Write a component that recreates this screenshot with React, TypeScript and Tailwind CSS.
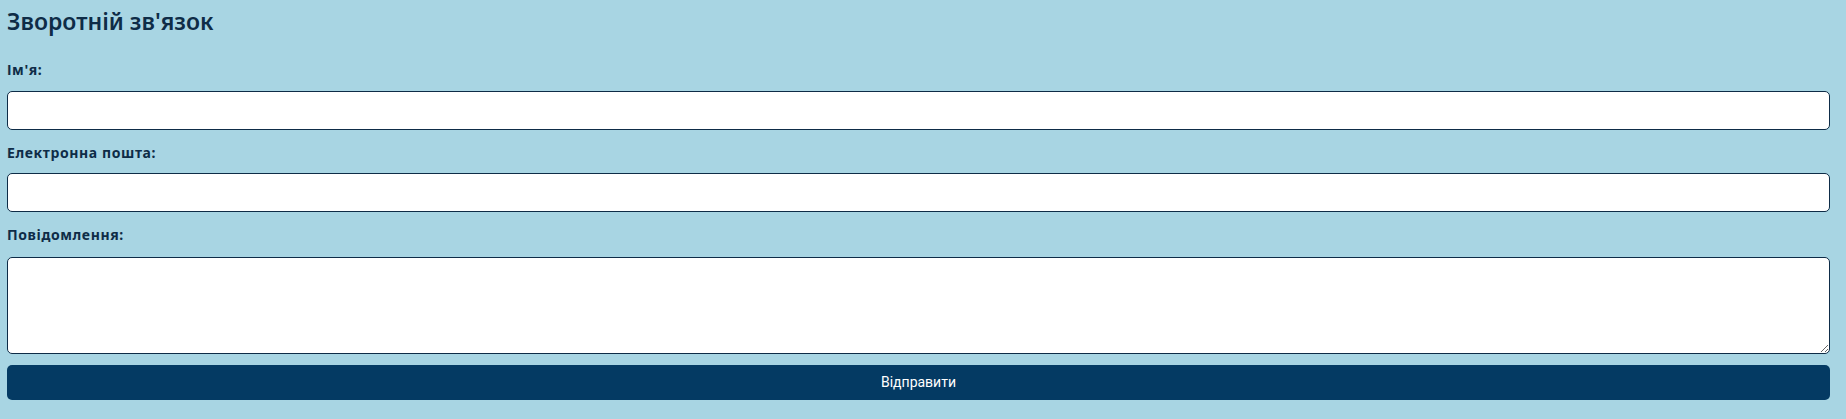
import React from "react";

export default function App() {
  return (
    <div className="min-h-[419px] w-full bg-[#a8d5e3] pl-[7px] pr-[16px] pt-[5px] text-[#0e2c47]" style={{ fontFamily: '"Noto Sans", "Open Sans", sans-serif' }}>
      <form className="flex flex-col" onSubmit={(e) => e.preventDefault()}>
        <h2 className="m-0 text-[23px] font-semibold leading-[32px]">Зворотній зв'язок</h2>
        <label className="mt-[23px] block text-[14px] font-bold leading-[20px] tracking-[0.6px]">Ім'я:</label>
        <input type="text" className="mt-[11px] box-border h-[39px] w-full rounded-[5px] border border-[#0e2c47] bg-white px-2 outline-none" />
        <label className="mt-[13px] block text-[14px] font-bold leading-[20px] tracking-[0.6px]">Електронна пошта:</label>
        <input type="email" className="mt-[10px] box-border h-[39px] w-full rounded-[5px] border border-[#0e2c47] bg-white px-2 outline-none" />
        <label className="mt-[13px] block text-[14px] font-bold leading-[20px] tracking-[0.6px]">Повідомлення:</label>
        <textarea className="mt-[12px] box-border block h-[97px] w-full resize-y rounded-[5px] border border-[#0e2c47] bg-white px-2 outline-none" />
        <button type="submit" className="mt-[11px] h-[35px] w-full rounded-[5px] bg-[#043a63] text-[14px] text-white" style={{ fontFamily: 'Roboto, "Liberation Sans", sans-serif' }}>
          Відправити
        </button>
      </form>
    </div>
  );
}
